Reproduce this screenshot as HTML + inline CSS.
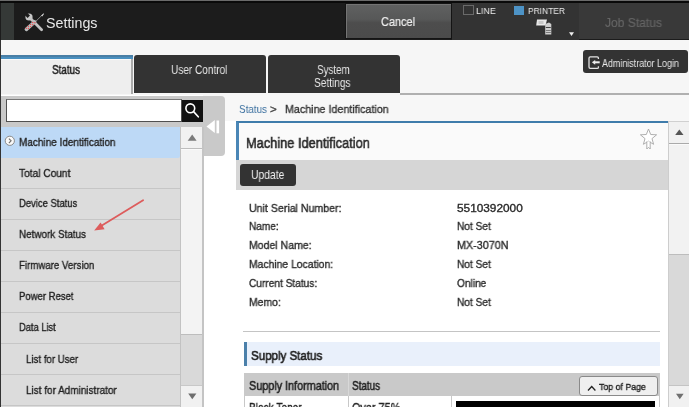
<!DOCTYPE html>
<html><head><meta charset="utf-8">
<style>
html,body{margin:0;padding:0;width:689px;height:407px;overflow:hidden;background:#fff;}
body{position:relative;font-family:"Liberation Sans",sans-serif;}
.b{position:absolute;box-sizing:border-box;}
.t{position:absolute;white-space:nowrap;line-height:1;transform-origin:0 0;will-change:transform;-webkit-text-stroke:0.35px currentColor;font-family:"Liberation Sans",sans-serif;}
svg{position:absolute;overflow:visible;}
</style></head><body>
<!-- header -->
<div class="b" style="left:0;top:0;width:689px;height:40px;background:#1c1c1c;"></div>
<div class="b" style="left:0;top:0;width:689px;height:1px;background:#6b6b6b;"></div>
<div class="b" style="left:0;top:1px;width:689px;height:2px;background:#0a0a0a;"></div>
<div class="b" style="left:1px;top:3px;width:13px;height:37px;background:#353937;"></div>
<div class="b" style="left:452px;top:3px;width:127px;height:37px;background:#333;"></div>
<div class="b" style="left:579px;top:3px;width:110px;height:36px;background:#393939;"></div>
<div class="b" style="left:345px;top:3px;width:107px;height:36px;border:1px solid #141414;box-shadow:inset 1px 1px 0 #747474;background:linear-gradient(#606161,#575858 45%,#4d4d4d 55%,#4b4b4b);"></div>
<!-- line/printer checkboxes -->
<div class="b" style="left:463px;top:5px;width:11px;height:10px;border:1px solid #6a6a6a;background:#333;"></div>
<div class="b" style="left:514px;top:6px;width:10px;height:9px;background:#4d93c6;"></div>
<!-- subheader -->
<div class="b" style="left:0;top:40px;width:689px;height:55px;background:#f6f6f6;"></div>
<div class="b" style="left:1px;top:55px;width:132px;height:39px;background:#eeeeee;border-right:2px solid #aaaaaa;"></div>
<div class="b" style="left:1px;top:55px;width:132px;height:2px;background:#4a7fa6;"></div><div class="b" style="left:1px;top:57px;width:132px;height:2px;background:#4a90c0;"></div><div class="b" style="left:1px;top:59px;width:130px;height:1px;background:#fafafa;"></div>
<div class="b" style="left:134px;top:55px;width:132px;height:38px;background:#333;border-radius:3px 3px 0 0;"></div>
<div class="b" style="left:268px;top:55px;width:132px;height:38px;background:#333;border-radius:3px 3px 0 0;"></div>
<div class="b" style="left:400px;top:93px;width:289px;height:2px;background:#b0b0b0;"></div>
<div class="b" style="left:0;top:40px;width:1px;height:367px;background:#333;"></div>
<div class="b" style="left:583px;top:50px;width:105px;height:23px;background:#333;border-radius:3px;"></div>
<!-- sidebar -->
<div class="b" style="left:203px;top:95px;width:486px;height:26px;background:#f7f7f7;"></div>
<div class="b" style="left:1px;top:96px;width:224px;height:31px;background:#c9c9c9;border-top-right-radius:4px;"></div>
<div class="b" style="left:203px;top:120px;width:22px;height:36px;background:#c9c9c9;border-bottom-right-radius:4px;"></div>
<div class="b" style="left:6px;top:99px;width:176px;height:23px;background:#fff;border:1px solid #505050;border-top-color:#777;"></div>
<div class="b" style="left:182px;top:100px;width:21px;height:22px;background:#111;"></div>
<div class="b" style="left:1px;top:127px;width:179px;height:280px;background:#dcdcdc;"></div>
<div class="b" style="left:1px;top:127px;width:179px;height:31px;background:#bdd9f6;border-bottom-right-radius:2px;"></div>
<div class="b" style="left:1px;top:188px;width:179px;height:1px;background:#c6c6c6;"></div>
<div class="b" style="left:1px;top:219px;width:179px;height:1px;background:#c6c6c6;"></div>
<div class="b" style="left:1px;top:250px;width:179px;height:1px;background:#c6c6c6;"></div>
<div class="b" style="left:1px;top:281px;width:179px;height:1px;background:#c6c6c6;"></div>
<div class="b" style="left:1px;top:312px;width:179px;height:1px;background:#c6c6c6;"></div>
<div class="b" style="left:1px;top:343px;width:179px;height:1px;background:#c6c6c6;"></div>
<div class="b" style="left:1px;top:374px;width:179px;height:1px;background:#c6c6c6;"></div>
<div class="b" style="left:1px;top:405px;width:179px;height:1px;background:#c6c6c6;"></div>
<div class="b" style="left:180px;top:127px;width:24px;height:280px;background:#d9d9d9;border-left:1px solid #c2c2c2;border-right:2px solid #c4c4c4;"></div>
<div class="b" style="left:181px;top:127px;width:21px;height:22px;background:#f1f1f1;border-bottom:1px solid #bdbdbd;"></div>
<div class="b" style="left:181px;top:149px;width:21px;height:186px;background:#f3f3f3;border-top:1px solid #fafafa;border-bottom:1px solid #bdbdbd;"></div>
<div class="b" style="left:181px;top:385px;width:21px;height:22px;background:#f1f1f1;border-top:1px solid #c8c8c8;"></div>
<!-- main content -->
<div class="b" style="left:236px;top:121px;width:432px;height:39px;background:#fafafa;border-top:2px solid #3f7cab;border-left:3px solid #4a86b6;"></div>
<div class="b" style="left:236px;top:160px;width:432px;height:30px;background:#d6d6d6;"></div>
<div class="b" style="left:240px;top:164px;width:56px;height:22px;background:#333;border-radius:3px;"></div>
<div class="b" style="left:243px;top:331px;width:417px;height:1px;background:#c4c4c4;"></div>
<div class="b" style="left:244px;top:342px;width:416px;height:24px;background:#e9f0fb;border-left:3px solid #4b80aa;"></div>
<div class="b" style="left:244px;top:373px;width:416px;height:23px;background:#c9c9c9;"></div>
<div class="b" style="left:348px;top:373px;width:1px;height:23px;background:#d8d8d8;"></div>
<div class="b" style="left:244px;top:396px;width:416px;height:11px;background:#fff;border-left:1px solid #c8c8c8;border-right:1px solid #c8c8c8;"></div>
<div class="b" style="left:348px;top:396px;width:1px;height:11px;background:#c8c8c8;"></div>
<div class="b" style="left:451px;top:396px;width:1px;height:11px;background:#c8c8c8;"></div>
<div class="b" style="left:456px;top:401px;width:199px;height:6px;background:#000;"></div>
<div class="b" style="left:579px;top:376px;width:79px;height:20px;background:#efefef;border:1px solid #8a8a8a;border-radius:3px;"></div>
<!-- main scrollbar -->
<div class="b" style="left:668px;top:121px;width:21px;height:286px;background:#d9d9d9;border-left:1px solid #cdcdcd;border-top:1px solid #d0d0d0;"></div>
<div class="b" style="left:669px;top:122px;width:20px;height:22px;background:#f1f1f1;border-bottom:1px solid #aaaaaa;"></div>
<div class="b" style="left:669px;top:144px;width:20px;height:111px;background:#f2f2f2;border-top:1px solid #fafafa;border-bottom:1px solid #bdbdbd;"></div>
<div class="b" style="left:669px;top:385px;width:20px;height:22px;background:#f1f1f1;border-top:1px solid #c4c4c4;"></div>

<!-- icons -->
<!-- tools icon -->
<svg style="left:0;top:0" width="689" height="407" viewBox="0 0 689 407">
  <!-- screwdriver shaft -->
  <line x1="42.6" y1="14.6" x2="35.5" y2="21.7" stroke="#8a8a8a" stroke-width="1"/>
  <path d="M41.2 15.4 L43.6 13.3 L44 14 L42.2 16.6 Z" fill="#d8d8d8"/>
  <!-- wrench handle -->
  <path d="M30.5 18.6 L41.6 29.7" stroke="#c2c2c2" stroke-width="2.8" stroke-linecap="round"/>
  <!-- wrench head -->
  <circle cx="29" cy="17" r="3.6" fill="#c8c8c8"/>
  <path d="M24.2 14.6 L26.6 12.2 L30 15.6 L27.6 18 Z" fill="#1c1c1c"/>
  <!-- screwdriver handle -->
  <path d="M26.4 29.3 L34.6 22" stroke="#b9bdbd" stroke-width="3.6" stroke-linecap="round"/>
  <circle cx="26.27" cy="28.16" r="0.72" fill="#e64a4e"/>
  <circle cx="28.46" cy="28.50" r="0.72" fill="#e64a4e"/>
  <circle cx="28.42" cy="26.28" r="0.72" fill="#e64a4e"/>
  <circle cx="30.62" cy="26.61" r="0.72" fill="#e64a4e"/>
  <circle cx="30.58" cy="24.39" r="0.72" fill="#e64a4e"/>
  <circle cx="32.78" cy="24.72" r="0.72" fill="#e64a4e"/>
  <circle cx="32.74" cy="22.50" r="0.72" fill="#e64a4e"/>
  <circle cx="34.93" cy="22.84" r="0.72" fill="#e64a4e"/>
  <!-- magnifier -->
  <circle cx="190.3" cy="108.3" r="4.4" fill="none" stroke="#fff" stroke-width="1.6"/>
  <line x1="193.6" y1="111.6" x2="198.3" y2="116.8" stroke="#fff" stroke-width="1.6" stroke-linecap="round"/>
  <!-- collapse icon -->
  <path d="M206.5 126.5 L214.8 120 L214.8 133 Z" fill="#fff"/>
  <rect x="216.5" y="120.5" width="2.6" height="12.8" fill="#fff"/>
  <!-- circle arrow -->
  <circle cx="9.8" cy="140.8" r="4.6" fill="#fafafa" stroke="#8a8a8a" stroke-width="1"/>
  <path d="M8.9 138.6 L11.1 140.8 L8.9 143" fill="none" stroke="#707070" stroke-width="1.1"/>
  <!-- sidebar scroll arrows -->
  <path d="M187.7 140.8 L192.2 134.4 L196.6 140.8 Z" fill="#7a7a7a"/>
  <path d="M188.2 393.5 L196.4 393.5 L192.3 399.3 Z" fill="#6e6e6e"/>
  <!-- main scroll arrows -->
  <path d="M675.2 135 L679.3 129.5 L683.5 135 Z" fill="#555"/>
  <path d="M676 393.7 L683.6 393.7 L679.8 399.3 Z" fill="#707070"/>
  <!-- printer dropdown -->
  <path d="M569 32.2 L574 32.2 L571.5 36 Z" fill="#eee"/>
  <!-- printer icon -->
  <path d="M537 19.5 L547 19.5 L545.5 25.5 L536.2 25.5 Z" fill="#e8e8e8"/>
  <rect x="538.5" y="21" width="5" height="3" fill="#c8c8c8"/>
  <path d="M545.2 24 L549 22.5 L551.3 24 L551.3 34.6 L545.2 34.6 Z" fill="#cfcfcf"/>
  <rect x="545.8" y="27" width="5" height="1" fill="#444"/>
  <rect x="545.8" y="30" width="5" height="0.8" fill="#666"/>
  <rect x="545.8" y="32.2" width="5" height="0.8" fill="#666"/>
  <!-- admin login icon -->
  <path d="M598.4 59 L598.4 58.1 Q598.4 56.9 597.2 56.9 L590.3 56.9 Q589 56.9 589 58.2 L589 67.1 Q589 68.4 590.3 68.4 L597.2 68.4 Q598.4 68.4 598.4 67.2 L598.4 66.2" fill="none" stroke="#e4e4e4" stroke-width="1.3"/>
  <path d="M591.9 62.3 L595.2 59.9 L595.2 64.7 Z" fill="#eee"/>
  <rect x="594.6" y="61.3" width="5.1" height="2" fill="#eee"/>
  <!-- star -->
  <path d="M648.5 129 L650.7 134.5 L656.6 134.8 L652 138.6 L653.6 144.3 L648.5 141.2 L643.4 144.3 L645 138.6 L640.4 134.8 L646.3 134.5 Z" fill="#fff" stroke="#a6a6a6" stroke-width="0.9" stroke-linejoin="round"/>
  <path d="M646.8 141.5 L646.8 149 L648.5 147.3 L650.2 149 L650.2 141.5" fill="#fff" stroke="#a6a6a6" stroke-width="0.9"/>
  <!-- red arrow -->
  <line x1="143.1" y1="200.3" x2="99" y2="227.3" stroke="#dd5c5c" stroke-width="1.8" stroke-linecap="round"/>
  <path d="M94.2 230.6 L100.6 222.6 L104.6 229.2 Z" fill="#dd5c5c"/>
  <!-- top of page caret -->
  <path d="M588 390.5 L591.7 386.5 L595.4 390.5" fill="none" stroke="#222" stroke-width="1.3"/>
</svg>
<div class="t" style="left:46.00px;top:16.25px;font-size:14px;color:#e8e8e8;transform:scaleX(1.018);-webkit-text-stroke:0;">Settings</div>
<div class="t" style="left:381.40px;top:15.74px;font-size:12px;color:#f0f0f0;transform:scaleX(0.910);-webkit-text-stroke:0.2px #f0f0f0;">Cancel</div>
<div class="t" style="left:476.40px;top:6.47px;font-size:9.6px;color:#ececec;transform:scaleX(0.927);-webkit-text-stroke:0;">LINE</div>
<div class="t" style="left:528.20px;top:6.47px;font-size:9.6px;color:#ececec;transform:scaleX(0.878);-webkit-text-stroke:0;">PRINTER</div>
<div class="t" style="left:605.20px;top:16.67px;font-size:12.2px;color:#666666;transform:scaleX(0.989);-webkit-text-stroke:0.15px #666;">Job Status</div>
<div class="t" style="left:51.80px;top:64.04px;font-size:12px;color:#222;transform:scaleX(0.824);-webkit-text-stroke:0.5px #222;">Status</div>
<div class="t" style="left:170.80px;top:63.54px;font-size:12px;color:#e6e6e6;transform:scaleX(0.837);-webkit-text-stroke:0;">User Control</div>
<div class="t" style="left:316.50px;top:64.14px;font-size:12px;color:#e6e6e6;transform:scaleX(0.818);-webkit-text-stroke:0;">System</div>
<div class="t" style="left:314.40px;top:76.84px;font-size:12px;color:#e6e6e6;transform:scaleX(0.844);-webkit-text-stroke:0;">Settings</div>
<div class="t" style="left:602.20px;top:57.81px;font-size:10.5px;color:#e8e8e8;transform:scaleX(0.851);-webkit-text-stroke:0;">Administrator Login</div>
<div class="t" style="left:238.80px;top:103.77px;font-size:11.5px;color:#3a6f9f;transform:scaleX(0.859);-webkit-text-stroke:0;">Status</div>
<div class="t" style="left:270.40px;top:103.77px;font-size:11.5px;color:#444;">&gt;</div>
<div class="t" style="left:284.80px;top:103.77px;font-size:11.5px;color:#333;transform:scaleX(0.932);">Machine Identification</div>
<div class="t" style="left:245.70px;top:135.06px;font-size:15.4px;color:#2a2a2a;transform:scaleX(0.832);-webkit-text-stroke:0.6px #2a2a2a;">Machine Identification</div>
<div class="t" style="left:250.60px;top:169.07px;font-size:12.2px;color:#f0f0f0;transform:scaleX(0.849);-webkit-text-stroke:0;">Update</div>
<div class="t" style="left:248.70px;top:202.62px;font-size:11.2px;color:#2a2a2a;transform:scaleX(0.948);">Unit Serial Number:</div>
<div class="t" style="left:456.60px;top:202.62px;font-size:11.2px;color:#2a2a2a;transform:scaleX(1.056);">5510392000</div>
<div class="t" style="left:248.70px;top:221.42px;font-size:11.2px;color:#2a2a2a;transform:scaleX(0.903);">Name:</div>
<div class="t" style="left:456.60px;top:221.42px;font-size:11.2px;color:#2a2a2a;transform:scaleX(0.905);">Not Set</div>
<div class="t" style="left:248.70px;top:240.22px;font-size:11.2px;color:#2a2a2a;transform:scaleX(0.940);">Model Name:</div>
<div class="t" style="left:456.60px;top:240.22px;font-size:11.2px;color:#2a2a2a;transform:scaleX(0.962);">MX-3070N</div>
<div class="t" style="left:248.70px;top:259.02px;font-size:11.2px;color:#2a2a2a;transform:scaleX(0.926);">Machine Location:</div>
<div class="t" style="left:456.60px;top:259.02px;font-size:11.2px;color:#2a2a2a;transform:scaleX(0.905);">Not Set</div>
<div class="t" style="left:248.70px;top:277.82px;font-size:11.2px;color:#2a2a2a;transform:scaleX(0.906);">Current Status:</div>
<div class="t" style="left:456.60px;top:277.82px;font-size:11.2px;color:#2a2a2a;transform:scaleX(0.907);">Online</div>
<div class="t" style="left:248.70px;top:296.62px;font-size:11.2px;color:#2a2a2a;transform:scaleX(0.931);">Memo:</div>
<div class="t" style="left:456.60px;top:296.62px;font-size:11.2px;color:#2a2a2a;transform:scaleX(0.905);">Not Set</div>
<div class="t" style="left:18.90px;top:136.85px;font-size:11.4px;color:#222;transform:scaleX(0.876);">Machine Identification</div>
<div class="t" style="left:18.90px;top:167.55px;font-size:11.4px;color:#222;transform:scaleX(0.892);">Total Count</div>
<div class="t" style="left:18.90px;top:198.45px;font-size:11.4px;color:#222;transform:scaleX(0.830);">Device Status</div>
<div class="t" style="left:18.90px;top:229.15px;font-size:11.4px;color:#222;transform:scaleX(0.867);">Network Status</div>
<div class="t" style="left:18.90px;top:260.45px;font-size:11.4px;color:#222;transform:scaleX(0.850);">Firmware Version</div>
<div class="t" style="left:18.90px;top:291.35px;font-size:11.4px;color:#222;transform:scaleX(0.835);">Power Reset</div>
<div class="t" style="left:18.90px;top:322.05px;font-size:11.4px;color:#222;transform:scaleX(0.816);">Data List</div>
<div class="t" style="left:25.50px;top:353.95px;font-size:11.4px;color:#222;transform:scaleX(0.851);">List for User</div>
<div class="t" style="left:25.50px;top:384.85px;font-size:11.4px;color:#222;transform:scaleX(0.874);">List for Administrator</div>
<div class="t" style="left:250.90px;top:349.36px;font-size:13.4px;color:#222;transform:scaleX(0.862);-webkit-text-stroke:0.6px #222;">Supply Status</div>
<div class="t" style="left:248.70px;top:379.57px;font-size:12.2px;color:#222;transform:scaleX(0.887);-webkit-text-stroke:0.5px #222;">Supply Information</div>
<div class="t" style="left:352.00px;top:379.57px;font-size:12.2px;color:#222;transform:scaleX(0.809);-webkit-text-stroke:0.5px #222;">Status</div>
<div class="t" style="left:598.50px;top:382.20px;font-size:9.8px;color:#222;transform:scaleX(0.895);">Top of Page</div>
<div class="t" style="left:249.20px;top:402.34px;font-size:12px;color:#222;transform:scaleX(0.843);">Black Toner</div>
<div class="t" style="left:351.50px;top:402.34px;font-size:12px;color:#222;transform:scaleX(0.905);">Over 75%</div>
</body></html>
